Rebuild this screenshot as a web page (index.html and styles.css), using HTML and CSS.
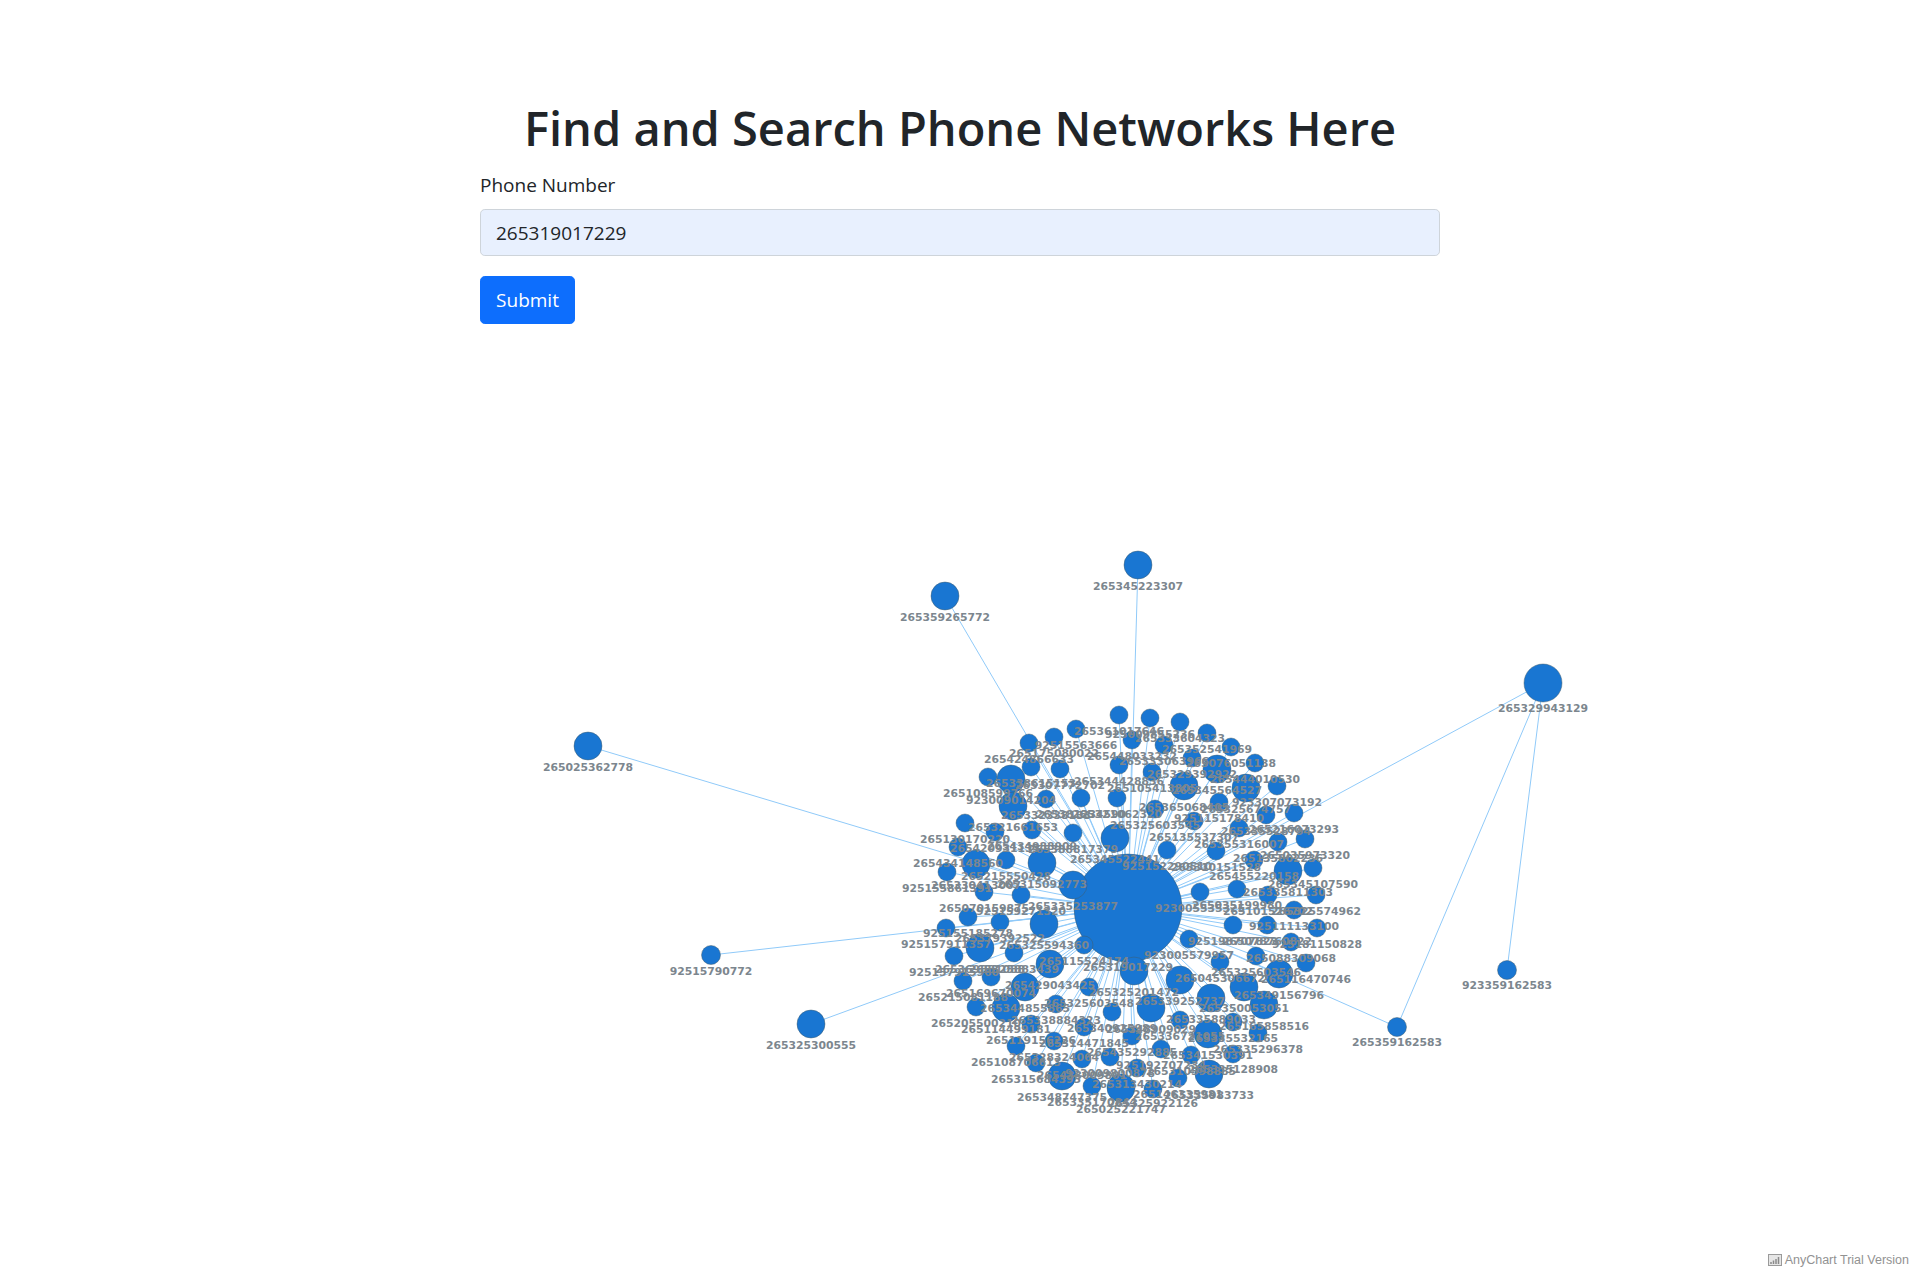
FILE: index.html
```html
<!DOCTYPE html>
<html lang="en">
<head>
<meta charset="utf-8">
<title>Find and Search Phone Networks Here</title>
<link rel="stylesheet" href="styles.css">
</head>
<body>
<main class="container">
<h1 class="title">Find and Search Phone Networks Here</h1>
<form class="search">
<label class="field-label" for="phone">Phone Number</label>
<input class="field-input" id="phone" type="text" value="265319017229">
<button class="submit" type="button">Submit</button>
</form>
</main>
<section class="chart">
<svg class="graph" viewBox="0 324 1920 949" width="1920" height="949" role="img" aria-label="Phone network graph">
<path class="edges" d="M1128 908L1138 565M1128 908L945 596M1128 908L1543 683M1128 908L588 746M1128 908L711 955M1128 908L811 1024M1128 908L1397 1027M1543 683L1397 1027M1543 683L1507 970M1128 908L1119 715M1128 908L1076 729M1128 908L1054 737M1128 908L1029 743M1128 908L1132 740M1128 908L1031 767M1128 908L1060 769M1128 908L1119 765M1128 908L988 777M1128 908L1011 779M1128 908L1046 799M1128 908L1081 798M1128 908L1117 798M1128 908L1013 806M1128 908L965 823M1128 908L995 832M1128 908L1032 830M1128 908L1073 833M1128 908L1115 838M1128 908L958 847M1128 908L1006 860M1128 908L976 864M1128 908L1042 863M1128 908L947 872M1128 908L984 892M1128 908L1021 895M1128 908L1073 885M1128 908L1150 718M1128 908L1180 722M1128 908L1207 733M1128 908L1231 747M1128 908L1255 763M1128 908L1164 745M1128 908L1192 758M1128 908L1217 769M1128 908L1152 772M1128 908L1277 786M1128 908L1184 786M1128 908L1246 788M1128 908L1219 802M1128 908L1155 809M1128 908L1194 821M1128 908L1266 815M1128 908L1294 813M1128 908L1239 828M1128 908L1278 842M1128 908L1305 839M1128 908L1167 850M1128 908L1216 851M1128 908L1254 860M1128 908L1288 871M1128 908L1313 868M1128 908L1200 892M1128 908L1237 889M1128 908L1268 895M1128 908L1316 895M1128 908L1294 910M1128 908L968 917M1128 908L1000 922M1128 908L1044 924M1128 908L946 928M1128 908L980 948M1128 908L1014 953M1128 908L1084 945M1128 908L954 956M1128 908L1050 964M1128 908L991 977M1128 908L963 981M1128 908L1025 987M1128 908L1089 987M1128 908L976 1007M1128 908L1006 1008M1128 908L1056 1004M1128 908L1112 1012M1128 908L1031 1024M1128 908L1084 1027M1128 908L1132 1036M1128 908L1016 1046M1128 908L1054 1041M1128 908L1082 1059M1128 908L1110 1057M1128 908L1036 1063M1128 908L1062 1076M1128 908L1092 1086M1128 908L1121 1088M1128 908L1233 925M1128 908L1267 925M1128 908L1317 928M1128 908L1189 939M1128 908L1291 942M1128 908L1256 956M1128 908L1220 962M1128 908L1306 963M1128 908L1180 980M1128 908L1279 974M1128 908L1244 987M1128 908L1211 998M1128 908L1264 1005M1128 908L1151 1008M1128 908L1180 1020M1128 908L1233 1022M1128 908L1208 1034M1128 908L1258 1033M1128 908L1161 1049M1128 908L1191 1055M1128 908L1233 1054M1128 908L1137 1068M1128 908L1178 1078M1128 908L1209 1074M1128 908L1153 1089M1128 908L1134 971"/>
<g class="nodes">
<circle cx="1128" cy="908" r="54"/><circle cx="1138" cy="565" r="14"/><circle cx="945" cy="596" r="14"/><circle cx="1543" cy="683" r="19"/><circle cx="588" cy="746" r="14"/><circle cx="711" cy="955" r="9.5"/><circle cx="811" cy="1024" r="14"/><circle cx="1507" cy="970" r="9.5"/><circle cx="1397" cy="1027" r="9.5"/>
<circle cx="1119" cy="715" r="9"/><circle cx="1076" cy="729" r="9"/><circle cx="1054" cy="737" r="9"/><circle cx="1029" cy="743" r="9"/><circle cx="1132" cy="740" r="9"/><circle cx="1031" cy="767" r="9"/><circle cx="1060" cy="769" r="9"/><circle cx="1119" cy="765" r="9"/><circle cx="988" cy="777" r="9"/><circle cx="1011" cy="779" r="14"/><circle cx="1046" cy="799" r="9"/><circle cx="1081" cy="798" r="9"/><circle cx="1117" cy="798" r="9"/><circle cx="1013" cy="806" r="14"/><circle cx="965" cy="823" r="9"/><circle cx="995" cy="832" r="9"/><circle cx="1032" cy="830" r="9"/><circle cx="1073" cy="833" r="9"/><circle cx="1115" cy="838" r="14"/><circle cx="958" cy="847" r="9"/><circle cx="1006" cy="860" r="9"/><circle cx="976" cy="864" r="14"/><circle cx="1042" cy="863" r="14"/><circle cx="947" cy="872" r="9"/><circle cx="984" cy="892" r="9"/><circle cx="1021" cy="895" r="9"/><circle cx="1073" cy="885" r="14"/>
<circle cx="1150" cy="718" r="9"/><circle cx="1180" cy="722" r="9"/><circle cx="1207" cy="733" r="9"/><circle cx="1231" cy="747" r="9"/><circle cx="1255" cy="763" r="9"/><circle cx="1164" cy="745" r="9"/><circle cx="1192" cy="758" r="9"/><circle cx="1217" cy="769" r="14"/><circle cx="1152" cy="772" r="9"/><circle cx="1277" cy="786" r="9"/><circle cx="1184" cy="786" r="14"/><circle cx="1246" cy="788" r="14"/><circle cx="1219" cy="802" r="9"/><circle cx="1155" cy="809" r="9"/><circle cx="1194" cy="821" r="9"/><circle cx="1266" cy="815" r="9"/><circle cx="1294" cy="813" r="9"/><circle cx="1239" cy="828" r="9"/><circle cx="1278" cy="842" r="9"/><circle cx="1305" cy="839" r="9"/><circle cx="1167" cy="850" r="9"/><circle cx="1216" cy="851" r="9"/><circle cx="1254" cy="860" r="9"/><circle cx="1288" cy="871" r="14"/><circle cx="1313" cy="868" r="9"/><circle cx="1200" cy="892" r="9"/><circle cx="1237" cy="889" r="9"/><circle cx="1268" cy="895" r="9"/><circle cx="1316" cy="895" r="9"/><circle cx="1294" cy="910" r="9"/>
<circle cx="968" cy="917" r="9"/><circle cx="1000" cy="922" r="9"/><circle cx="1044" cy="924" r="14"/><circle cx="946" cy="928" r="9"/><circle cx="980" cy="948" r="14"/><circle cx="1014" cy="953" r="9"/><circle cx="1084" cy="945" r="9"/><circle cx="954" cy="956" r="9"/><circle cx="1050" cy="964" r="14"/><circle cx="991" cy="977" r="9"/><circle cx="963" cy="981" r="9"/><circle cx="1025" cy="987" r="14"/><circle cx="1089" cy="987" r="9"/><circle cx="976" cy="1007" r="9"/><circle cx="1006" cy="1008" r="14"/><circle cx="1056" cy="1004" r="9"/><circle cx="1112" cy="1012" r="9"/><circle cx="1031" cy="1024" r="9"/><circle cx="1084" cy="1027" r="9"/><circle cx="1132" cy="1036" r="9"/><circle cx="1016" cy="1046" r="9"/><circle cx="1054" cy="1041" r="9"/><circle cx="1082" cy="1059" r="9"/><circle cx="1110" cy="1057" r="9"/><circle cx="1036" cy="1063" r="9"/><circle cx="1062" cy="1076" r="14"/><circle cx="1092" cy="1086" r="9"/><circle cx="1121" cy="1088" r="14"/>
<circle cx="1233" cy="925" r="9"/><circle cx="1267" cy="925" r="9"/><circle cx="1317" cy="928" r="9"/><circle cx="1189" cy="939" r="9"/><circle cx="1291" cy="942" r="9"/><circle cx="1256" cy="956" r="9"/><circle cx="1220" cy="962" r="9"/><circle cx="1306" cy="963" r="9"/><circle cx="1180" cy="980" r="14"/><circle cx="1279" cy="974" r="14"/><circle cx="1244" cy="987" r="14"/><circle cx="1211" cy="998" r="14"/><circle cx="1264" cy="1005" r="14"/><circle cx="1151" cy="1008" r="14"/><circle cx="1180" cy="1020" r="9"/><circle cx="1233" cy="1022" r="9"/><circle cx="1208" cy="1034" r="14"/><circle cx="1258" cy="1033" r="9"/><circle cx="1161" cy="1049" r="9"/><circle cx="1191" cy="1055" r="9"/><circle cx="1233" cy="1054" r="9"/><circle cx="1137" cy="1068" r="9"/><circle cx="1178" cy="1078" r="9"/><circle cx="1209" cy="1074" r="14"/><circle cx="1153" cy="1089" r="9"/><circle cx="1134" cy="971" r="14"/>
</g>
<g class="labels">
<text x="1128" y="971">265319017229</text><text x="1138" y="590">265345223307</text><text x="945" y="621">265359265772</text><text x="1543" y="712">265329943129</text><text x="588" y="771">265025362778</text><text x="711" y="975">92515790772</text><text x="811" y="1049">265325300555</text><text x="1507" y="989">923359162583</text><text x="1397" y="1046">265359162583</text>
<text x="1119" y="735">265361017646</text><text x="1076" y="749">92515563666</text><text x="1054" y="757">265175080022</text><text x="1029" y="763">265424866633</text><text x="1132" y="760">265448033232</text><text x="1031" y="787">265338615153</text><text x="1060" y="789">265307772702</text><text x="1119" y="785">265344428836</text><text x="988" y="797">265108599766</text><text x="1011" y="804">923009014204</text><text x="1046" y="819">265332338133</text><text x="1081" y="818">265381234590</text><text x="1117" y="818">265321062320</text><text x="1013" y="831">265321661653</text><text x="965" y="843">265130170220</text><text x="995" y="852">265420931133</text><text x="1032" y="850">265434988909</text><text x="1073" y="853">265388817379</text><text x="1115" y="863">265345522441</text><text x="958" y="867">265434148560</text><text x="1006" y="880">265215550428</text><text x="976" y="889">265330413007</text><text x="1042" y="888">265315092773</text><text x="947" y="892">925155861391</text><text x="984" y="912">265070159875</text><text x="1021" y="915">925159271320</text><text x="1073" y="910">265335253877</text>
<text x="1150" y="738">925009855236</text><text x="1180" y="742">265333604323</text><text x="1207" y="753">265352541969</text><text x="1231" y="767">265076051138</text><text x="1255" y="783">265444010530</text><text x="1164" y="765">265333063966</text><text x="1192" y="778">265329392922</text><text x="1217" y="794">265345564527</text><text x="1152" y="792">265105413805</text><text x="1277" y="806">923307073192</text><text x="1184" y="811">265365068405</text><text x="1246" y="813">265325674757</text><text x="1219" y="822">925115178410</text><text x="1155" y="829">265325603545</text><text x="1194" y="841">265135537307</text><text x="1266" y="835">265335528794</text><text x="1294" y="833">265216073293</text><text x="1239" y="848">265355316007</text><text x="1278" y="862">265135802236</text><text x="1305" y="859">265035973320</text><text x="1167" y="870">925152290510</text><text x="1216" y="871">265310151528</text><text x="1254" y="880">265455220158</text><text x="1288" y="896">265335811303</text><text x="1313" y="888">265345107590</text><text x="1200" y="912">923005535325</text><text x="1237" y="909">265035199980</text><text x="1268" y="915">265101526702</text><text x="1316" y="915">265325574962</text><text x="1294" y="930">925111133100</text>
<text x="968" y="937">925155185278</text><text x="1000" y="942">265379392522</text><text x="1044" y="949">265325594360</text><text x="946" y="948">925157911357</text><text x="980" y="973">265369881088</text><text x="1014" y="973">265325883439</text><text x="1084" y="965">265115524174</text><text x="954" y="976">925157915960</text><text x="1050" y="989">265429043425</text><text x="991" y="997">265169670074</text><text x="963" y="1001">265215081188</text><text x="1025" y="1012">265344855865</text><text x="1089" y="1007">265325603548</text><text x="976" y="1027">265205500210</text><text x="1006" y="1033">265114499181</text><text x="1056" y="1024">265338884323</text><text x="1112" y="1032">265340925989</text><text x="1031" y="1044">265119156226</text><text x="1084" y="1047">265314471845</text><text x="1132" y="1056">265435292885</text><text x="1016" y="1066">265108706613</text><text x="1054" y="1061">265328324064</text><text x="1082" y="1079">265433009801</text><text x="1110" y="1077">923009800878</text><text x="1036" y="1083">265315684395</text><text x="1062" y="1101">265348747375</text><text x="1092" y="1106">265335170844</text><text x="1121" y="1113">265025221747</text>
<text x="1233" y="945">925198707823</text><text x="1267" y="945">265078760822</text><text x="1317" y="948">925181150828</text><text x="1189" y="959">923005579957</text><text x="1291" y="962">265088309068</text><text x="1256" y="976">265325603546</text><text x="1220" y="982">265045306672</text><text x="1306" y="983">265116470746</text><text x="1180" y="1005">265339252737</text><text x="1279" y="999">265349156796</text><text x="1244" y="1012">265350053051</text><text x="1211" y="1023">265335889033</text><text x="1264" y="1030">265165858516</text><text x="1151" y="1033">265348909029</text><text x="1180" y="1040">265336721055</text><text x="1233" y="1042">265335532165</text><text x="1208" y="1059">265341530391</text><text x="1258" y="1053">265335296378</text><text x="1161" y="1069">925192707234</text><text x="1191" y="1075">265310598885</text><text x="1233" y="1073">265335128908</text><text x="1137" y="1088">265313430214</text><text x="1178" y="1098">265146335981</text><text x="1209" y="1099">265335983733</text><text x="1153" y="1107">265325922126</text><text x="1134" y="996">265325201472</text>
</g>
</svg>
<div class="credits">
<svg class="credits-icon" viewBox="0 0 14 12" width="14" height="12" aria-hidden="true"><rect x="0.5" y="0.5" width="13" height="11" fill="#e6e6e6" stroke="#9a9a9a"/><path d="M3 10V8M5.5 10V6.5M8 10V5M10.5 10V3" stroke="#8a8a8a" stroke-width="1.5"/></svg>
<span class="credits-text">AnyChart Trial Version</span>
</div>
</section>
</body>
</html>
```
FILE: styles.css
```css
html, body {
  margin: 0;
  padding: 0;
  background: #fff;
}
body {
  height: 1273px;
  overflow: hidden;
  font-family: "Open Sans", "Noto Sans", sans-serif;
  color: #212529;
}
.container {
  width: 960px;
  margin: 0 auto;
  padding-top: 97px;
}
.title {
  margin: 0 0 13px;
  font-size: 47px;
  line-height: 62px;
  font-weight: 600;
  text-align: center;
}
.search {
  display: flex;
  flex-direction: column;
  align-items: flex-start;
}
.field-label {
  font-size: 19px;
  line-height: 27px;
  margin-bottom: 10px;
}
.field-input {
  box-sizing: border-box;
  width: 100%;
  height: 47px;
  padding: 0 15px;
  font: 19px "Open Sans", "Noto Sans", sans-serif;
  color: #212529;
  background: #e8f0fe;
  border: 1px solid #ced4da;
  border-radius: 4.8px;
  margin-bottom: 20px;
}
.submit {
  box-sizing: border-box;
  width: 95px;
  height: 48px;
  padding: 0;
  font: 19px "Open Sans", "Noto Sans", sans-serif;
  color: #fff;
  background: #0d6efd;
  border: 1px solid #0d6efd;
  border-radius: 4.8px;
}
.chart {
  position: relative;
  height: 949px;
}
.graph {
  display: block;
}
.edges {
  fill: none;
  stroke: #90caf9;
  stroke-width: 1;
}
.nodes circle {
  fill: #1976d2;
  stroke: #455a64;
  stroke-opacity: 0.45;
  stroke-width: 1;
}
.labels text {
  font-family: "DejaVu Sans", Verdana, sans-serif;
  font-size: 10.8px;
  font-weight: 700;
  fill: #7c868e;
  text-anchor: middle;
}
.credits {
  position: absolute;
  right: 11px;
  bottom: 6px;
  display: flex;
  align-items: center;
  gap: 3px;
  font: 12.5px "Liberation Sans", Arial, sans-serif;
  color: #929292;
}
.credits-icon {
  display: block;
}
```
